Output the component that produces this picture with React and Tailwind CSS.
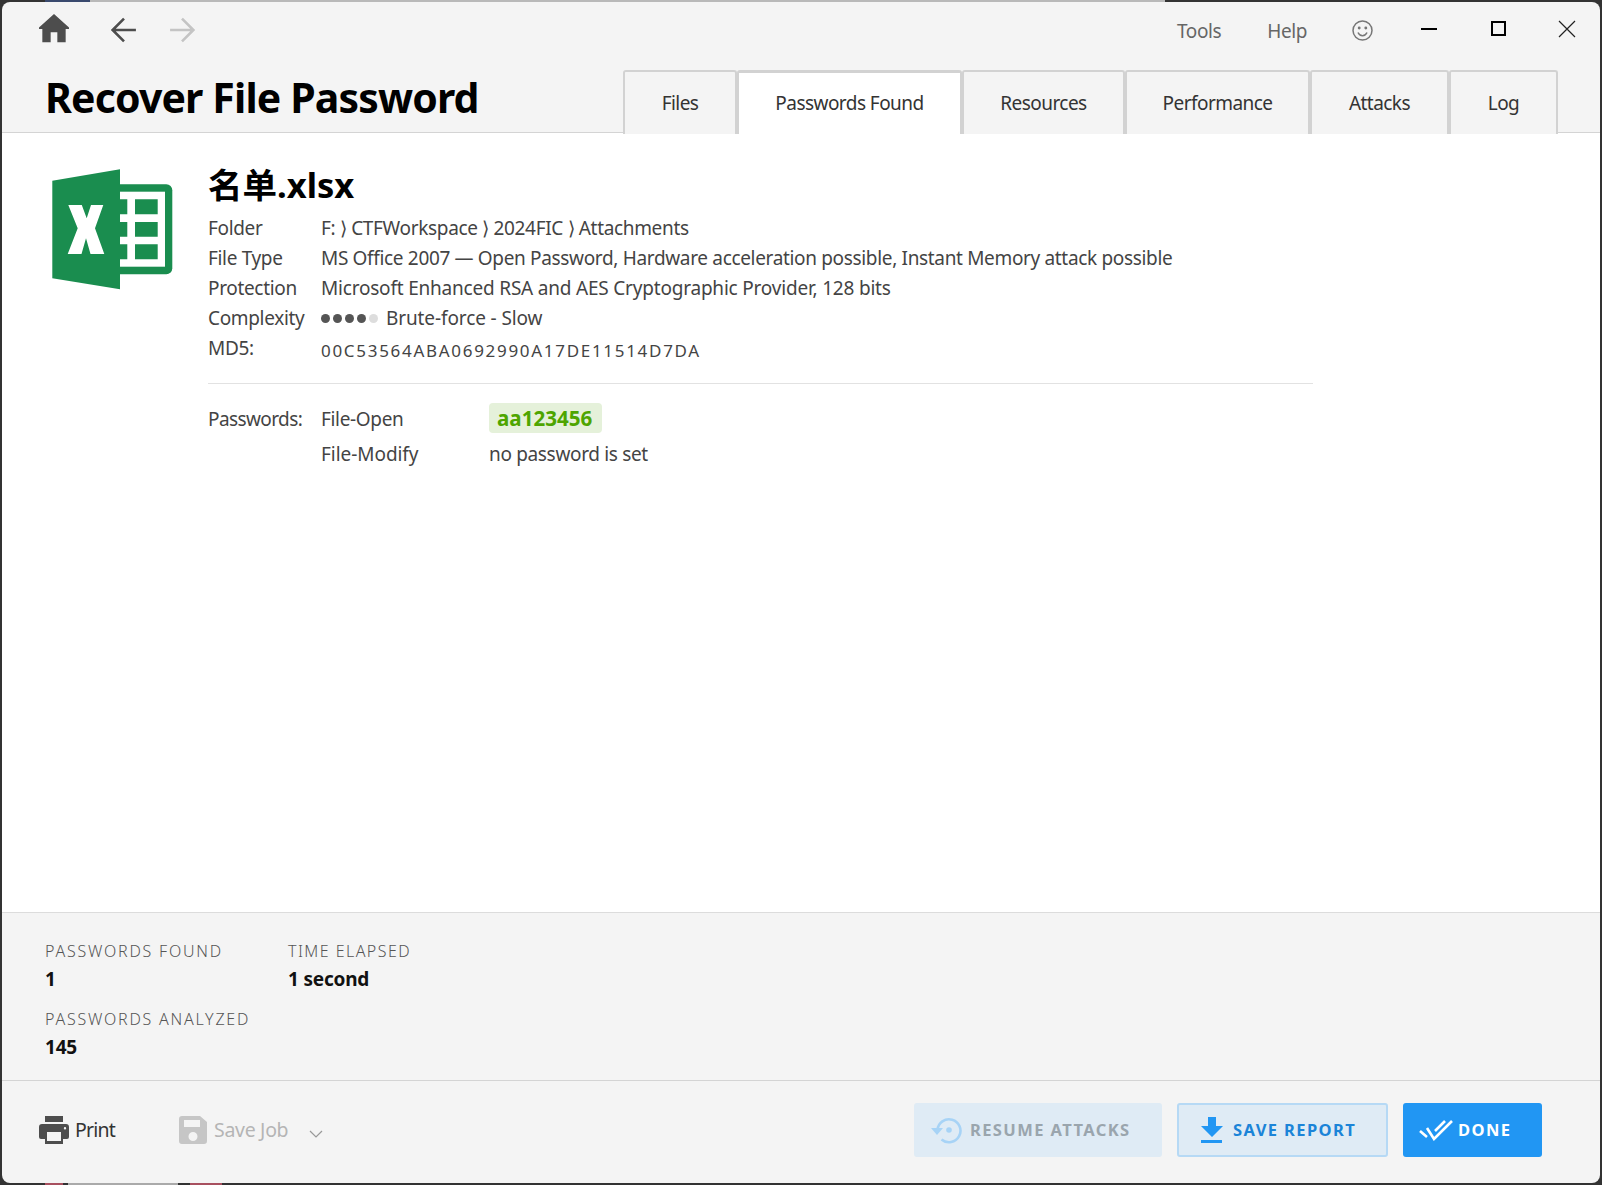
const font = { fontFamily: '"Noto Sans", "Noto Sans CJK SC", sans-serif' };

const tabs = [
  { name: "Files", w: "w-[114px]" },
  { name: "Passwords Found", w: "w-[225px]", active: true },
  { name: "Resources", w: "w-[163px]" },
  { name: "Performance", w: "w-[185px]" },
  { name: "Attacks", w: "w-[139px]" },
  { name: "Log", w: "w-[109px]" },
];

function ExcelIcon() {
  return (
    <svg width="121" height="121" viewBox="0 0 121 121" className="shrink-0">
      <rect x="60" y="15.3" width="60.3" height="90" rx="6" fill="#1a8d4f" />
      <rect x="68" y="22.7" width="45" height="75" fill="#fff" />
      <path
        d="M83 30.3h22.7v15H83zM83 53h22.7v14.7H83zM83 75.3h22.7v15H83zM68 30.3h7.3v15H68zM68 53h7.3v14.7H68zM68 75.3h7.3v15H68z"
        fill="#1a8d4f"
      />
      <path d="M.3 11.7 68 .3v120L.3 109.3z" fill="#1a8d4f" />
      <path
        d="M16.3 36h13.5l4.900 13.300L39 36h12.300L43 59.3 52.300 85H38.500L34 69.300 29.500 85H15.700L25.700 59.300z"
        fill="#fff"
      />
    </svg>
  );
}

function Row({ label, children }) {
  return (
    <div className="flex h-[30px] items-center">
      <div className="w-[113px] text-[#444]">{label}</div>
      <div className="text-[#444]">{children}</div>
    </div>
  );
}

function Stat({ label, value, tight }) {
  return (
    <div>
      <div className={`h-[26px] text-[16px] leading-[25px] font-light text-[#555] ${tight ? "tracking-[1.45px]" : "tracking-[1.78px]"}`}>{label}</div>
      <div className="h-[28px] text-[19px] leading-[28px] font-bold tracking-[-0.2px] text-[#111]">{value}</div>
    </div>
  );
}

export default function App() {
  return (
    <div className="flex h-[1185px] w-[1602px] flex-col bg-[#333]" style={font}>
      {/* whatever is behind the window */}
      <div className="flex h-[2px] shrink-0">
        <div className="w-[45px]" />
        <div className="w-[45px] bg-[#3a4a6e]" />
        <div className="w-[1075px] bg-[#b9b9b9]" />
      </div>

      <div className="mx-[2px] flex min-h-0 flex-1 flex-col overflow-hidden rounded-[8px] bg-[#f4f4f4]">
        <header className="relative h-[131px] shrink-0 border-b border-[#d4d4d4]">
          <div className="flex h-[67px] items-center pb-[11px] pl-[37px]">
            <svg width="30" height="30" viewBox="3 3 18 18" fill="#4d4d4d" className="mb-[2px]">
              <path d="M10 20v-6h4v6h5v-8h3L12 3 2 12h3v8z" />
            </svg>
            <svg width="26" height="26" viewBox="0 0 24 24" fill="none" stroke="#4d4d4d" strokeWidth="2.4" className="ml-[42px]">
              <path d="M23 12H2M12 1.5 1.5 12 12 22.5" />
            </svg>
            <svg width="26" height="26" viewBox="0 0 24 24" fill="none" stroke="#c4c4c4" strokeWidth="2.4" className="ml-[32px]">
              <path d="M1 12h21M12 1.5 22.5 12 12 22.5" />
            </svg>
            <div className="ml-auto flex items-center text-[19px] tracking-[-0.4px] text-[#666]">
              <span className="mt-[2px]">Tools</span>
              <span className="mt-[2px] ml-[46px]">Help</span>
              <svg width="21" height="21" viewBox="0 0 21 21" fill="none" stroke="#777" strokeWidth="1.5" className="ml-[45px]">
                <circle cx="10.5" cy="10.5" r="9.5" />
                <circle cx="7.2" cy="8" r=".7" fill="#777" />
                <circle cx="13.8" cy="8" r=".7" fill="#777" />
                <path d="M6 12.500c1 2.300 2.700 3.200 4.500 3.200s3.500-.9 4.500-3.200" />
              </svg>
              <div className="mb-[3px] ml-[48px] h-[2px] w-[16px] bg-black" />
              <div className="mb-[3px] ml-[54px] h-[15px] w-[15px] border-2 border-black" />
              <svg width="18" height="18" viewBox="0 0 18 18" stroke="#222" strokeWidth="1.2" className="mr-[24px] mb-[3px] ml-[52px]">
                <path d="m1 1 16 16M17 1 1 17" />
              </svg>
            </div>
          </div>
          <div className="flex items-end justify-between pr-[42px] pl-[43px]">
            <h1 className="mb-[8px] text-[41px] leading-[56px] font-bold tracking-[-0.86px] text-black">Recover File Password</h1>
            <nav className="-mb-px flex h-[64px]">
              {tabs.map((t) => (
                <div
                  key={t.name}
                  className={`flex items-center justify-center rounded-t-[3px] border-x-2 border-[#d2d2d2] text-[19px] tracking-[-0.55px] text-[#333] ${t.w} ${
                    t.active ? "border-t-[3px] bg-white" : "border-t-2 bg-[#f4f4f4] pt-[1px]"
                  }`}
                >
                  {t.name}
                </div>
              ))}
            </nav>
          </div>
        </header>

        <main className="flex min-h-0 flex-1 bg-white pt-[36px] pl-[50px]">
          <ExcelIcon />
          <div className="-mt-[6px] ml-[35px] w-[1105px] text-[19px] tracking-[-0.335px]">
            <div className="h-[50px] text-[34.5px] leading-[44px] font-bold tracking-normal text-black">名单.xlsx</div>
            <Row label="Folder">F: ⟩ CTFWorkspace ⟩ 2024FIC ⟩ Attachments</Row>
            <Row label="File Type">MS Office 2007 — Open Password, Hardware acceleration possible, Instant Memory attack possible</Row>
            <Row label="Protection">
              <span className="tracking-[-0.2px]">Microsoft Enhanced RSA and AES Cryptographic Provider, 128 bits</span>
            </Row>
            <Row label="Complexity">
              <div className="flex items-center">
                <span className="h-[9px] w-[9px] rounded-full bg-[#555]" />
                <span className="ml-[3px] h-[9px] w-[9px] rounded-full bg-[#555]" />
                <span className="ml-[3px] h-[9px] w-[9px] rounded-full bg-[#555]" />
                <span className="ml-[3px] h-[9px] w-[9px] rounded-full bg-[#555]" />
                <span className="ml-[3px] h-[9px] w-[9px] rounded-full bg-[#ddd]" />
                <span className="ml-[8px] tracking-[-0.11px]">Brute-force - Slow</span>
              </div>
            </Row>
            <Row label="MD5:">
              <span className="relative top-[2px] text-[17px] tracking-[1.7px]">00C53564ABA0692990A17DE11514D7DA</span>
            </Row>
            <div className="mt-[20px] border-t border-[#e2e2e2]" />
            <div className="mt-[17px] grid grid-cols-[113px_168px_auto] items-center text-[#444]">
              <div className="h-[35px] leading-[37px] tracking-[-0.6px]">Passwords:</div>
              <div className="h-[35px] leading-[37px]">File-Open</div>
              <div>
                <span className="inline-block rounded-[4px] bg-[#e5f1da] pr-[10px] pl-[8px] text-[20.6px] leading-[30px] font-bold tracking-normal text-[#4ea500]">aa123456</span>
              </div>
              <div />
              <div className="h-[35px] leading-[37px] tracking-[-0.05px]">File-Modify</div>
              <div className="h-[35px] leading-[37px]">no password is set</div>
            </div>
          </div>
        </main>

        <section className="grid h-[168px] shrink-0 grid-cols-[243px_auto] content-start gap-y-[14px] border-t border-[#dcdcdc] pt-[26px] pl-[43px]">
          <Stat label="PASSWORDS FOUND" value="1" />
          <Stat label="TIME ELAPSED" value="1 second" tight />
          <Stat label="PASSWORDS ANALYZED" value="145" />
        </section>

        <footer className="flex h-[103px] shrink-0 items-start border-t border-[#d4d4d4] pt-[22px] pr-[58px] pl-[37px]">
          <div className="flex h-[54px] items-center text-[19.5px] tracking-[-0.3px] text-[#333]">
            <svg width="30" height="28" viewBox="0 0 30 28" fill="#4d4d4d">
              <path
                fillRule="evenodd"
                d="M6 0h18v6H6zM3 8h24a3 3 0 0 1 3 3v10a2 2 0 0 1-2 2h-4v5H6v-5H2a2 2 0 0 1-2-2V11a3 3 0 0 1 3-3zm5 8v9h14v-9zM26 11a1.200 1.200 0 1 0 0 2.400 1.200 1.200 0 0 0 0-2.400z"
              />
            </svg>
            <span className="ml-[6px] tracking-[-0.8px]">Print</span>
            <svg width="28" height="28" viewBox="0 0 28 28" fill="#c6c6c6" className="ml-[64px]">
              <path
                fillRule="evenodd"
                d="M3 0h18l7 6v19a3 3 0 0 1-3 3H3a3 3 0 0 1-3-3V3a3 3 0 0 1 3-3zm2 4v7h16V4zm9 12a4.500 4.500 0 1 0 0 9 4.500 4.500 0 0 0 0-9z"
              />
            </svg>
            <span className="ml-[7px] text-[#b5b5b5]">Save Job</span>
            <svg width="14" height="8" viewBox="0 0 14 8" fill="none" stroke="#999" strokeWidth="1.2" className="mt-[8px] ml-[21px]">
              <path d="m1 1 6 6 6-6" />
            </svg>
          </div>
          <div className="ml-auto flex gap-[15px] text-[16.5px] font-bold tracking-[1.4px]">
            <button className="flex h-[54px] w-[248px] items-center rounded-[3px] bg-[#dfebf5] pl-[17px] text-[#9aa5ad]">
              <svg width="32" height="28" viewBox="0 0 32 28" fill="none" stroke="#a7d3f6" strokeWidth="2.6">
                <path d="M6.500 14a11.500 11.500 0 1 1 4 9.500" />
                <path d="M0 12h12l-6 7z" fill="#a7d3f6" stroke="none" />
                <circle cx="18" cy="14" r="2.800" fill="#a7d3f6" stroke="none" />
              </svg>
              <span className="ml-[7px]">RESUME ATTACKS</span>
            </button>
            <button className="flex h-[54px] w-[211px] items-center rounded-[3px] border-2 border-[#b6d9f5] bg-[#dfebf5] pl-[22px] text-[#1b84d8]">
              <svg width="22" height="26" viewBox="0 0 22 26" fill="#2196f3">
                <path d="M7 0h8v9h7L11 20 0 9h7zM0 23h21v3H0z" />
              </svg>
              <span className="ml-[10px]">SAVE REPORT</span>
            </button>
            <button className="flex h-[54px] w-[139px] items-center rounded-[3px] bg-[#2196f3] pl-[16px] text-white">
              <svg width="34" height="22" viewBox="0 0 34 22" fill="none" stroke="#fff" strokeWidth="2.600">
                <path d="m1 12 7 6M8 9l7 11L33 2M16 12 26 2" />
              </svg>
              <span className="ml-[5px]">DONE</span>
            </button>
          </div>
        </footer>
      </div>

      <div className="flex h-[2px] shrink-0">
        <div className="w-[45px]" />
        <div className="w-[18px] bg-[#a8505f]" />
        <div className="w-[5px]" />
        <div className="w-[110px] bg-[#aaa]" />
        <div className="w-[12px]" />
        <div className="w-[32px] bg-[#a8505f]" />
      </div>
    </div>
  );
}
